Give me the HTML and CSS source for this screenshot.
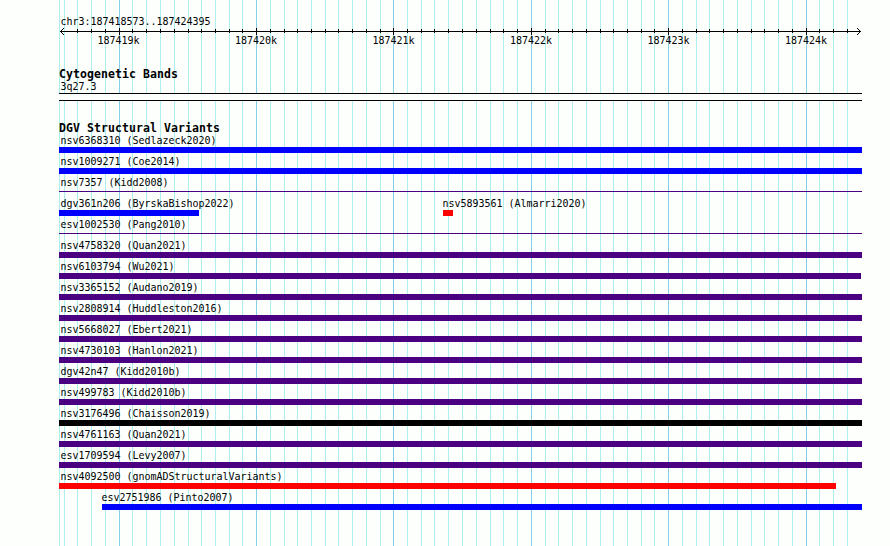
FILE: index.html
```html
<!DOCTYPE html>
<html lang="en">
<head>
    <meta charset="UTF-8">
    <title>chr3:187418573..187424395</title>
    <link rel="stylesheet" href="styles.css">
</head>
<body>
    <div class="browser">
        <!-- grid lines, every 100 bp, darker every 1 kb -->
        <svg class="grid" width="803" height="546" shape-rendering="crispEdges">
            <path class="minor" d="M.5 0v546M5.5 0v546M18.5 0v546M32.5 0v546M46.5 0v546M73.5 0v546M87.5 0v546M101.5 0v546M115.5 0v546M129.5 0v546M142.5 0v546M156.5 0v546M170.5 0v546M183.5 0v546M211.5 0v546M225.5 0v546M238.5 0v546M252.5 0v546M266.5 0v546M279.5 0v546M293.5 0v546M307.5 0v546M321.5 0v546M348.5 0v546M362.5 0v546M375.5 0v546M389.5 0v546M403.5 0v546M417.5 0v546M431.5 0v546M444.5 0v546M458.5 0v546M486.5 0v546M499.5 0v546M513.5 0v546M527.5 0v546M541.5 0v546M554.5 0v546M568.5 0v546M582.5 0v546M595.5 0v546M623.5 0v546M637.5 0v546M650.5 0v546M664.5 0v546M678.5 0v546M692.5 0v546M705.5 0v546M719.5 0v546M733.5 0v546M760.5 0v546M774.5 0v546M788.5 0v546"/>
            <path class="major" d="M60.5 0V546 M197.5 0V546 M334.5 0V546 M472.5 0V546 M609.5 0V546 M747.5 0V546"/>
        </svg>

        <div class="ruler">
            <div class="label">chr3:187418573..187424395</div>
            <svg class="axis" width="803" height="8" shape-rendering="crispEdges">
                <path d="M1 3.5h801M18.5 1v4M32.5 1v4M46.5 1v4M73.5 1v4M87.5 1v4M101.5 1v4M115.5 1v4M129.5 1v4M142.5 1v4M156.5 1v4M170.5 1v4M183.5 1v4M211.5 1v4M225.5 1v4M238.5 1v4M252.5 1v4M266.5 1v4M279.5 1v4M293.5 1v4M307.5 1v4M321.5 1v4M348.5 1v4M362.5 1v4M375.5 1v4M389.5 1v4M403.5 1v4M417.5 1v4M431.5 1v4M444.5 1v4M458.5 1v4M486.5 1v4M499.5 1v4M513.5 1v4M527.5 1v4M541.5 1v4M554.5 1v4M568.5 1v4M582.5 1v4M595.5 1v4M623.5 1v4M637.5 1v4M650.5 1v4M664.5 1v4M678.5 1v4M692.5 1v4M705.5 1v4M719.5 1v4M733.5 1v4M760.5 1v4M774.5 1v4M788.5 1v4"/>
                <path d="M60.5 0v7M197.5 0v7M334.5 0v7M472.5 0v7M609.5 0v7M747.5 0v7"/>
                <!-- arrow heads -->
                <path d="M4 .5h1M3 1.5h1M2 2.5h1M2 4.5h1M3 5.5h1M4 6.5h1M798 .5h1M799 1.5h1M800 2.5h1M800 4.5h1M799 5.5h1M798 6.5h1"/>
            </svg>
            <div class="ticks">
                <span class="label">187419k</span>
                <span class="label">187420k</span>
                <span class="label">187421k</span>
                <span class="label">187422k</span>
                <span class="label">187423k</span>
                <span class="label">187424k</span>
            </div>
        </div>

        <div class="track cyto">
            <h2>Cytogenetic Bands</h2>
            <div class="label">3q27.3</div>
            <div class="band"></div>
        </div>

        <div class="track variants">
            <h2>DGV Structural Variants</h2>
            <div class="row"><div class="label">nsv6368310 (Sedlazeck2020)</div><div class="bar gain"></div></div>
            <div class="row"><div class="label">nsv1009271 (Coe2014)</div><div class="bar gain"></div></div>
            <div class="row"><div class="label">nsv7357 (Kidd2008)</div><div class="bar thin"></div></div>
            <div class="row pair">
                <div class="feature first"><div class="label">dgv361n206 (ByrskaBishop2022)</div><div class="bar gain short"></div></div>
                <div class="feature"><div class="label">nsv5893561 (Almarri2020)</div><div class="bar loss tiny"></div></div>
            </div>
            <div class="row"><div class="label">esv1002530 (Pang2010)</div><div class="bar thin"></div></div>
            <div class="row"><div class="label">nsv4758320 (Quan2021)</div><div class="bar inversion"></div></div>
            <div class="row wu"><div class="label">nsv6103794 (Wu2021)</div><div class="bar inversion"></div></div>
            <div class="row"><div class="label">nsv3365152 (Audano2019)</div><div class="bar inversion"></div></div>
            <div class="row"><div class="label">nsv2808914 (Huddleston2016)</div><div class="bar inversion"></div></div>
            <div class="row"><div class="label">nsv5668027 (Ebert2021)</div><div class="bar inversion"></div></div>
            <div class="row"><div class="label">nsv4730103 (Hanlon2021)</div><div class="bar inversion"></div></div>
            <div class="row"><div class="label">dgv42n47 (Kidd2010b)</div><div class="bar inversion"></div></div>
            <div class="row"><div class="label">nsv499783 (Kidd2010b)</div><div class="bar inversion"></div></div>
            <div class="row"><div class="label">nsv3176496 (Chaisson2019)</div><div class="bar complex"></div></div>
            <div class="row"><div class="label">nsv4761163 (Quan2021)</div><div class="bar inversion"></div></div>
            <div class="row"><div class="label">esv1709594 (Levy2007)</div><div class="bar inversion"></div></div>
            <div class="row gnomad"><div class="label">nsv4092500 (gnomADStructuralVariants)</div><div class="bar loss"></div></div>
            <div class="row pinto"><div class="label">esv2751986 (Pinto2007)</div><div class="bar gain"></div></div>
        </div>
    </div>
</body>
</html>
```
FILE: styles.css
```css
body{
    margin: 0;
    background-color: #fdfffc;
    color: #000;
    font-family: "DejaVu Sans Mono", monospace;
}

.browser{
    position: relative;
    width: 803px;
    height: 546px;
    margin-left: 59px;
    overflow: hidden;
}

.grid{
    position: absolute;
    top: 0;
    left: 0;
    z-index: -1;
}

.grid path,
.axis path{
    fill: none;
    stroke-width: 1;
}

.grid .minor{
    stroke: #afeeee;
}

.grid .major{
    stroke: #87ceeb;
}

.axis{
    display: block;
}

.axis path{
    stroke: #000;
}

.label{
    height: 13px;
    padding-left: 1.5px;
    font-size: 10px;
    line-height: 13px;
    letter-spacing: -0.02px;
    white-space: nowrap;
    transform: scaleY(1.1);
}

h2{
    height: 12px;
    margin: 0;
    font-size: 11.5px;
    line-height: 12px;
    letter-spacing: 0.077px;
    white-space: nowrap;
}

.ruler{
    height: 68px;
    padding-top: 15px;
    box-sizing: border-box;
}

.ticks{
    display: grid;
    grid-template-columns: repeat(6, 137.5px);
    padding-left: 37px;
    margin-top: -2px;
}

.cyto{
    height: 54px;
}

.band{
    height: 6px;
    border-top: 1px solid #000;
    border-bottom: 1px solid #000;
    background-color: #fdfffc;
}

.row{
    height: 21px;
}

.bar{
    height: 6px;
}

.gain{
    background-color: #0000ff;
}

.loss{
    background-color: #ff0000;
}

.inversion{
    background-color: #4b0082;
}

.complex{
    background-color: #000;
}

.thin{
    height: 1px;
    margin-top: 2px;
    background-color: #4b0082;
}

.pair{
    display: flex;
}

.first{
    width: 384px;
}

.feature .label{
    margin-left: -2px;
}

.first .label{
    margin-left: 0;
}

.short{
    width: 140px;
}

.tiny{
    width: 10px;
}

.wu{
    width: 802px;
}

.gnomad{
    width: 777px;
}

.pinto{
    margin-left: 43px;
}

.pinto .label{
    margin-left: -2px;
}
```
